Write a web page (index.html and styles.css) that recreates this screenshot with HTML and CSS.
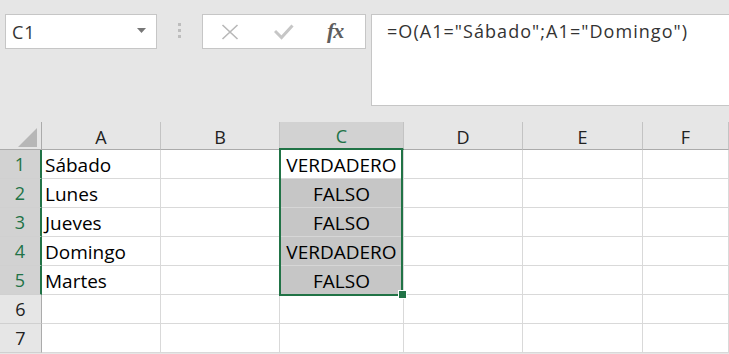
FILE: index.html
```html
<!DOCTYPE html>
<html lang="es">
<head>
<meta charset="utf-8">
<title>Excel - función O</title>
<link rel="stylesheet" href="styles.css">
</head>
<body>
<div class="toolbar">
  <div class="namebox">
    <span class="nb-text">C1</span>
    <svg class="nb-arrow" width="9" height="5" viewBox="0 0 9 5"><polygon points="0,0 9,0 4.5,5" fill="#777"/></svg>
  </div>
  <div class="grip"><i></i><i></i><i></i></div>
  <div class="fxbox">
    <svg class="ico-x" width="18" height="16" viewBox="0 0 18 16"><path d="M1.5 1 L16.5 15 M16.5 1 L1.5 15" stroke="#b8b8b8" stroke-width="1.6" fill="none"/></svg>
    <svg class="ico-check" width="20" height="16" viewBox="0 0 20 16"><path d="M1 7 L7.5 13.5 L18.5 1.5" stroke="#c6c6c6" stroke-width="3" fill="none"/></svg>
    <span class="fx">fx</span>
  </div>
  <div class="formula">=O(A1="Sábado";A1="Domingo")</div>
</div>
<div class="sheet">
  <div class="grid">
    <div class="corner"><svg width="42" height="28" viewBox="0 0 42 28"><polygon points="37,6 37,25 18,25" fill="#b7b7b7"/></svg></div>
    <div class="ch">A</div>
    <div class="ch">B</div>
    <div class="ch sel">C</div>
    <div class="ch">D</div>
    <div class="ch">E</div>
    <div class="ch">F</div>

    <div class="rh sel">1</div>
    <div class="c">Sábado</div>
    <div class="c"></div>
    <div class="c b">VERDADERO</div>
    <div class="c"></div>
    <div class="c"></div>
    <div class="c"></div>

    <div class="rh sel">2</div>
    <div class="c">Lunes</div>
    <div class="c"></div>
    <div class="c b hl">FALSO</div>
    <div class="c"></div>
    <div class="c"></div>
    <div class="c"></div>

    <div class="rh sel">3</div>
    <div class="c">Jueves</div>
    <div class="c"></div>
    <div class="c b hl">FALSO</div>
    <div class="c"></div>
    <div class="c"></div>
    <div class="c"></div>

    <div class="rh sel">4</div>
    <div class="c">Domingo</div>
    <div class="c"></div>
    <div class="c b hl">VERDADERO</div>
    <div class="c"></div>
    <div class="c"></div>
    <div class="c"></div>

    <div class="rh sel">5</div>
    <div class="c">Martes</div>
    <div class="c"></div>
    <div class="c b hl">FALSO</div>
    <div class="c"></div>
    <div class="c"></div>
    <div class="c"></div>

    <div class="rh">6</div>
    <div class="c"></div>
    <div class="c"></div>
    <div class="c"></div>
    <div class="c"></div>
    <div class="c"></div>
    <div class="c"></div>

    <div class="rh">7</div>
    <div class="c"></div>
    <div class="c"></div>
    <div class="c"></div>
    <div class="c"></div>
    <div class="c"></div>
    <div class="c"></div>
  </div>
  <div class="selection"></div>
  <div class="handle"></div>
</div>
</body>
</html>
```

FILE: styles.css
```css
* { box-sizing: border-box; }
html, body { margin: 0; padding: 0; }
body {
  width: 729px;
  height: 354px;
  overflow: hidden;
  background: #e6e6e6;
  font-family: "Open Sans", "Noto Sans", sans-serif;
}

.toolbar {
  display: flex;
  align-items: flex-start;
  height: 122px;
  padding-top: 14px;
}

.namebox {
  margin-left: 5px;
  width: 152px;
  height: 35px;
  background: #fff;
  border: 1px solid #c6c6c6;
  display: flex;
  align-items: center;
  justify-content: space-between;
  padding: 0 10px 0 6px;
  font-size: 18px;
  line-height: 24px;
  color: #333;
}
.nb-text { letter-spacing: 1px; }
.nb-arrow { display: block; margin-top: -2px; }

.grip {
  width: 45px;
  height: 35px;
  display: flex;
  flex-direction: column;
  align-items: center;
  justify-content: center;
  gap: 3px;
  padding-bottom: 2px;
}
.grip i {
  display: block;
  width: 3px;
  height: 3px;
  background: #bdbdbd;
}

.fxbox {
  width: 164px;
  height: 35px;
  background: #fff;
  border: 1px solid #c6c6c6;
  display: flex;
  align-items: center;
  padding-left: 18px;
}
.ico-x { display: block; margin-top: 1px; }
.ico-check { display: block; margin-left: 35px; margin-top: 1px; }
.fx {
  margin-left: 33px;
  font-family: "Liberation Serif", "DejaVu Serif", serif;
  font-style: italic;
  font-weight: bold;
  font-size: 22px;
  color: #5e5e5e;
  letter-spacing: -1px;
  margin-top: -2px;
}

.formula {
  flex: 1;
  margin-left: 5px;
  margin-right: -2px;
  height: 92px;
  background: #fff;
  border: 1px solid #c6c6c6;
  padding: 4px 0 0 15px;
  font-size: 18px;
  line-height: 24px;
  letter-spacing: 1.05px;
  color: #333;
  white-space: nowrap;
}

.sheet {
  position: relative;
  height: 232px;
}

.grid {
  display: grid;
  grid-template-columns: 42px 119px 119px 124px 119px 120px 1fr;
  grid-template-rows: 28px repeat(7, 29px);
}

.corner {
  background: #e6e6e6;
  border-right: 1px solid #ababab;
  border-bottom: 1px solid #ababab;
}
.corner svg { display: block; }

.ch {
  background: #e6e6e6;
  border-right: 1px solid #c3c3c3;
  border-bottom: 1px solid #ababab;
  display: flex;
  align-items: center;
  justify-content: center;
  font-size: 18px;
  line-height: 24px;
  color: #222;
  padding-top: 2px;
}
.ch.sel {
  background: #d2d2d2;
  color: #217346;
  border-bottom: 2px solid #217346;
}

.rh {
  background: #e6e6e6;
  border-right: 1px solid #ababab;
  border-bottom: 1px solid #d0d0d0;
  display: flex;
  align-items: center;
  justify-content: center;
  font-size: 18px;
  line-height: 24px;
  color: #222;
}
.rh.sel {
  background: #d2d2d2;
  color: #217346;
  border-right: 2px solid #217346;
}

.c {
  background: #fff;
  border-right: 1px solid #d9d9d9;
  border-bottom: 1px solid #d9d9d9;
  font-size: 19px;
  line-height: 28px;
  padding: 1px 0 0 3px;
  color: #000;
  white-space: nowrap;
  overflow: hidden;
}
.c.b { text-align: center; padding-left: 0; }
.c.hl { background: #c6c6c6; border-bottom-color: #d6d6d6; }

.selection {
  position: absolute;
  left: 279px;
  top: 26px;
  width: 124px;
  height: 148px;
  border: 2px solid #217346;
  pointer-events: none;
}
.handle {
  position: absolute;
  left: 399px;
  top: 169px;
  width: 7px;
  height: 7px;
  background: #217346;
  box-shadow: 0 0 0 1px #fff;
}
```
